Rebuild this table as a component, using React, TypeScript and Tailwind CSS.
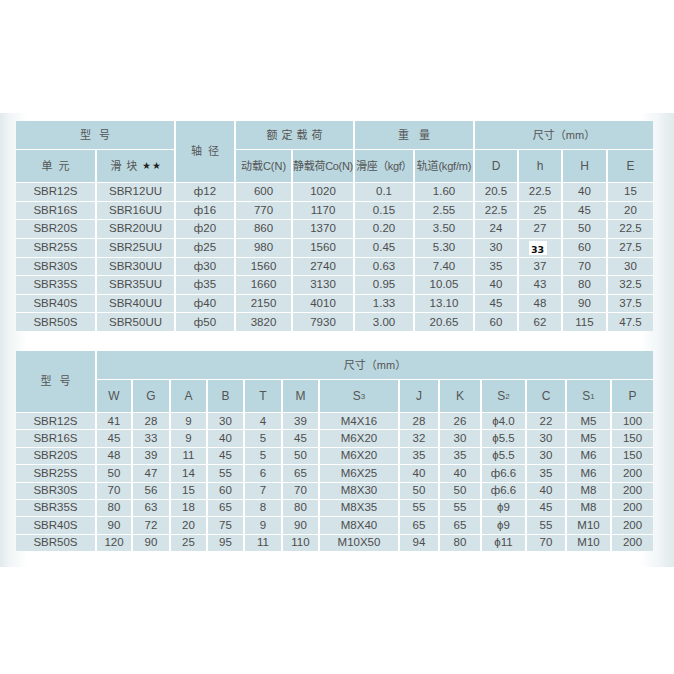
import React from "react";

const HEAD = "bg-[#bad7df]";
const DATA = "bg-[#d4e3e8]";
const cjk = "font-['Liberation_Sans','Noto_Sans_CJK_SC',sans-serif]";

function C({
  children,
  className = "",
}: {
  children?: React.ReactNode;
  className?: string;
}) {
  return (
    <div className={`flex items-center justify-center whitespace-nowrap ${className}`}>
      {children}
    </div>
  );
}

const t1: string[][] = [
  ["SBR12S", "SBR12UU", "ф12", "600", "1020", "0.1", "1.60", "20.5", "22.5", "40", "15"],
  ["SBR16S", "SBR16UU", "ф16", "770", "1170", "0.15", "2.55", "22.5", "25", "45", "20"],
  ["SBR20S", "SBR20UU", "ф20", "860", "1370", "0.20", "3.50", "24", "27", "50", "22.5"],
  ["SBR25S", "SBR25UU", "ф25", "980", "1560", "0.45", "5.30", "30", "__33", "60", "27.5"],
  ["SBR30S", "SBR30UU", "ф30", "1560", "2740", "0.63", "7.40", "35", "37", "70", "30"],
  ["SBR35S", "SBR35UU", "ф35", "1660", "3130", "0.95", "10.05", "40", "43", "80", "32.5"],
  ["SBR40S", "SBR40UU", "ф40", "2150", "4010", "1.33", "13.10", "45", "48", "90", "37.5"],
  ["SBR50S", "SBR50UU", "ф50", "3820", "7930", "3.00", "20.65", "60", "62", "115", "47.5"],
];

const t2: string[][] = [
  ["SBR12S", "41", "28", "9", "30", "4", "39", "M4X16", "28", "26", "ϕ4.0", "22", "M5", "100"],
  ["SBR16S", "45", "33", "9", "40", "5", "45", "M6X20", "32", "30", "ϕ5.5", "30", "M5", "150"],
  ["SBR20S", "48", "39", "11", "45", "5", "50", "M6X20", "35", "35", "ϕ5.5", "30", "M6", "150"],
  ["SBR25S", "50", "47", "14", "55", "6", "65", "M6X25", "40", "40", "ф6.6", "35", "M6", "200"],
  ["SBR30S", "70", "56", "15", "60", "7", "70", "M8X30", "50", "50", "ф6.6", "40", "M8", "200"],
  ["SBR35S", "80", "63", "18", "65", "8", "80", "M8X35", "55", "55", "ϕ9", "45", "M8", "200"],
  ["SBR40S", "90", "72", "20", "75", "9", "90", "M8X40", "65", "65", "ϕ9", "55", "M10", "200"],
  ["SBR50S", "120", "90", "25", "95", "11", "110", "M10X50", "94", "80", "ϕ11", "70", "M10", "200"],
];

function Sub({ base, n }: { base: string; n: string }) {
  return (
    <span>
      {base}
      <span className="text-[8px] align-[1px]">{n}</span>
    </span>
  );
}

export default function App() {
  return (
    <div className={`w-[674px] h-[674px] bg-white overflow-hidden ${cjk} text-[#4d4d4d]`}>
      <div className="mt-[113px] h-[454px] pt-[8px] pl-[16px] bg-[linear-gradient(90deg,#e2eaec_0%,#f1f5f6_1.5%,#ffffff_4%,#ffffff_95%,#f2f6f7_97.5%,#e0e9eb_100%)]">
        {/* Table 1 */}
        <div className="w-[637px] bg-white grid grid-cols-[79px_77px_58px_55px_60px_58px_58px_42px_42px_43px_45px] grid-rows-[28px_32px_repeat(8,17.625px)] gap-x-[2px] gap-y-[1px] text-[11.5px]">
          <C className={`${HEAD} col-span-2 text-[11px] text-[#555] tracking-[8px] pl-[8px]`}>型号</C>
          <C className={`${HEAD} row-span-2 text-[11px] text-[#555] tracking-[6px] pl-[6px]`}>轴径</C>
          <C className={`${HEAD} col-span-2 text-[11px] text-[#555] tracking-[4px] pl-[4px]`}>额定载荷</C>
          <C className={`${HEAD} col-span-2 text-[11px] text-[#555] tracking-[10px] pl-[10px]`}>重量</C>
          <C className={`${HEAD} col-span-4 text-[11px] text-[#555]`}>尺寸（mm）</C>

          <C className={`${HEAD} text-[11px] text-[#555] tracking-[6px] pl-[6px]`}>单元</C>
          <C className={`${HEAD} text-[11px] text-[#555]`}>
            <span className="tracking-[5px]">滑块</span>
            <span className="text-[8px] text-[#222]">★ ★</span>
          </C>
          <C className={`${HEAD} text-[11px] text-[#555]`}>动载C(N)</C>
          <C className={`${HEAD} text-[11px] text-[#555] tracking-[-0.3px]`}>静载荷Co(N)</C>
          <C className={`${HEAD} text-[11px] text-[#555] tracking-[-0.4px]`}>滑座（kgf）</C>
          <C className={`${HEAD} text-[11px] text-[#555] tracking-[-0.2px]`}>轨道(kgf/m)</C>
          <C className={`${HEAD} text-[12px] text-[#555]`}>D</C>
          <C className={`${HEAD} text-[12px] text-[#555]`}>h</C>
          <C className={`${HEAD} text-[12px] text-[#555]`}>H</C>
          <C className={`${HEAD} text-[12px] text-[#555]`}>E</C>

          {t1.map((row, ri) =>
            row.map((v, ci) => (
              <C key={`a${ri}-${ci}`} className={DATA}>
                {v === "__33" ? (
                  <span className="bg-white px-[2px] pt-[2px] mr-[4px] h-[14px] w-[18px] flex items-end text-[9.5px] font-bold text-[#111] font-['DejaVu_Sans',sans-serif] leading-none">
                    33
                  </span>
                ) : (
                  v
                )}
              </C>
            ))
          )}
        </div>

        {/* Table 2 */}
        <div className="mt-[20px] w-[637px] bg-white grid grid-cols-[79px_34px_36px_35px_35px_36px_35px_78px_38px_40px_43px_38px_43px_41px] grid-rows-[28px_32px_repeat(8,16.375px)] gap-x-[2px] gap-y-[1px] text-[11.5px]">
          <C className={`${HEAD} row-span-2 text-[11px] text-[#555] tracking-[8px] pl-[8px]`}>型号</C>
          <C className={`${HEAD} col-span-13 text-[11px] text-[#555]`}>尺寸（mm）</C>

          <C className={`${HEAD} text-[12px] text-[#555]`}>W</C>
          <C className={`${HEAD} text-[12px] text-[#555]`}>G</C>
          <C className={`${HEAD} text-[12px] text-[#555]`}>A</C>
          <C className={`${HEAD} text-[12px] text-[#555]`}>B</C>
          <C className={`${HEAD} text-[12px] text-[#555]`}>T</C>
          <C className={`${HEAD} text-[12px] text-[#555]`}>M</C>
          <C className={`${HEAD} text-[12px] text-[#555]`}>
            <Sub base="S" n="3" />
          </C>
          <C className={`${HEAD} text-[12px] text-[#555]`}>J</C>
          <C className={`${HEAD} text-[12px] text-[#555]`}>K</C>
          <C className={`${HEAD} text-[12px] text-[#555]`}>
            <Sub base="S" n="2" />
          </C>
          <C className={`${HEAD} text-[12px] text-[#555]`}>C</C>
          <C className={`${HEAD} text-[12px] text-[#555]`}>
            <Sub base="S" n="1" />
          </C>
          <C className={`${HEAD} text-[12px] text-[#555]`}>P</C>

          {t2.map((row, ri) =>
            row.map((v, ci) => (
              <C key={`b${ri}-${ci}`} className={DATA}>
                {v}
              </C>
            ))
          )}
        </div>
      </div>
    </div>
  );
}
